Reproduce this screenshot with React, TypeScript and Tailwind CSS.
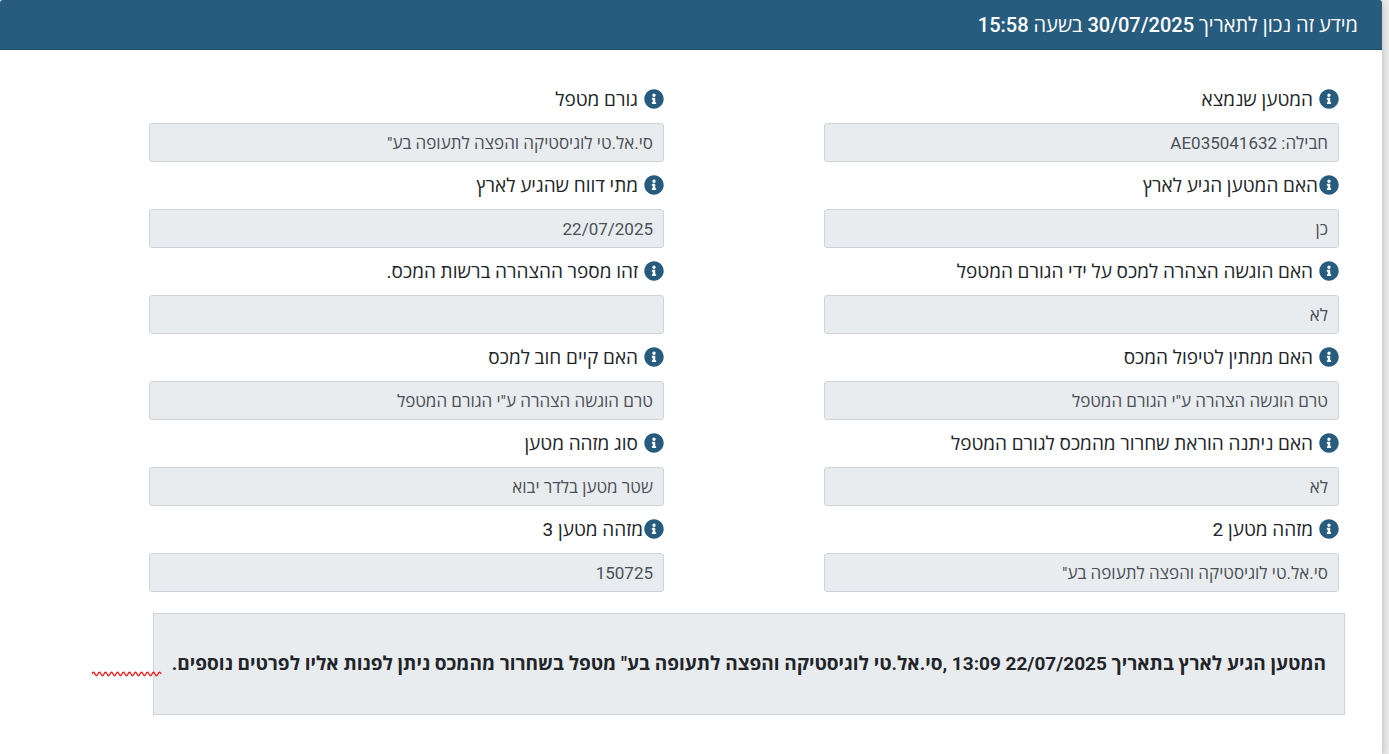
import { FaInfoCircle } from "react-icons/fa"

type FieldData = {
    id: string
    label: string
    value: string
    // a few labels sit right against their icon
    tight?: boolean
}

const FIELDS: FieldData[] = [
    { id: "cargo", label: "המטען שנמצא", value: "חבילה: AE035041632" },
    { id: "handler", label: "גורם מטפל", value: 'סי.אל.טי לוגיסטיקה והפצה לתעופה בע"' },
    { id: "arrived", label: "האם המטען הגיע לארץ", value: "כן", tight: true },
    { id: "arrival-date", label: "מתי דווח שהגיע לארץ", value: "22/07/2025" },
    { id: "declared", label: "האם הוגשה הצהרה למכס על ידי הגורם המטפל", value: "לא" },
    { id: "declaration-number", label: "זהו מספר ההצהרה ברשות המכס.", value: "" },
    { id: "pending", label: "האם ממתין לטיפול המכס", value: 'טרם הוגשה הצהרה ע"י הגורם המטפל' },
    { id: "debt", label: "האם קיים חוב למכס", value: 'טרם הוגשה הצהרה ע"י הגורם המטפל' },
    { id: "release", label: "האם ניתנה הוראת שחרור מהמכס לגורם המטפל", value: "לא" },
    { id: "id-type", label: "סוג מזהה מטען", value: "שטר מטען בלדר יבוא" },
    { id: "cargo-id-2", label: "מזהה מטען 2", value: 'סי.אל.טי לוגיסטיקה והפצה לתעופה בע"' },
    { id: "cargo-id-3", label: "מזהה מטען 3", value: "150725", tight: true },
]

function Field({ id, label, value, tight }: FieldData) {
    return (
        <div>
            <label
                htmlFor={id}
                className={`flex items-center h-[30px] mb-[9px] text-[19px] leading-[30px] text-[#212529] ${tight ? "gap-px" : "gap-1.5"}`}
            >
                <FaInfoCircle size={20} className="flex-shrink-0 text-[#275c7e]" />
                <span className="pt-0.5">{label}</span>
            </label>
            <input
                id={id}
                type="text"
                readOnly
                value={value}
                className="block w-full h-[39px] px-2.5 rounded-[3px] border border-[#ced4da] bg-[#e9ecef] text-[17px] text-[#495057] outline-none"
            />
        </div>
    )
}

function Squiggle() {
    const waves = Array.from({ length: 11 }, () => "q1.5 -3.5 3 0 t3 0").join(" ")
    return (
        <svg
            className="absolute -left-[62px] top-[57px]"
            width="70"
            height="6"
            viewBox="0 0 70 6"
            fill="none"
            stroke="#f01818"
            strokeWidth="1.3"
            aria-hidden="true"
        >
            <path d={`M0 3 ${waves} q1.5 -3.5 3 0`} />
        </svg>
    )
}

export default function App() {
    return (
        <div
            dir="rtl"
            className="min-h-screen bg-[#ececec] pr-[7px] font-[Roboto,'Open_Sans',sans-serif]"
        >
            <main className="min-h-screen rounded-t-[3px] bg-white shadow-[0_2px_8px_rgba(0,0,0,0.25)]">
                <header className="h-[50px] px-6 flex items-center rounded-t-[3px] border-b border-[#1f4c69] bg-[#275c7e]">
                    <h1 className="text-[20px] leading-[30px] font-medium text-white">
                        מידע זה נכון לתאריך 30/07/2025 בשעה 15:58
                    </h1>
                </header>

                <div className="pt-[34px] pb-10">
                    <div className="grid grid-cols-2 gap-x-40 gap-y-2 pr-[43px] pl-[149px]">
                        {FIELDS.map(field => (
                            <Field key={field.id} {...field} />
                        ))}
                    </div>

                    <div className="relative mt-[21px] mr-[37px] ml-[153px] pr-[18px] pl-2 py-[35px] border border-[#ced4da] bg-[#e9ecef]">
                        <p className="text-[19px] leading-[30px] font-bold text-[#212529]">
                            המטען הגיע לארץ בתאריך 22/07/2025 13:09 ,סי.אל.טי לוגיסטיקה והפצה לתעופה בע" מטפל בשחרור מהמכס ניתן לפנות אליו לפרטים נוספים.
                        </p>
                        <Squiggle />
                    </div>
                </div>
            </main>
        </div>
    )
}
